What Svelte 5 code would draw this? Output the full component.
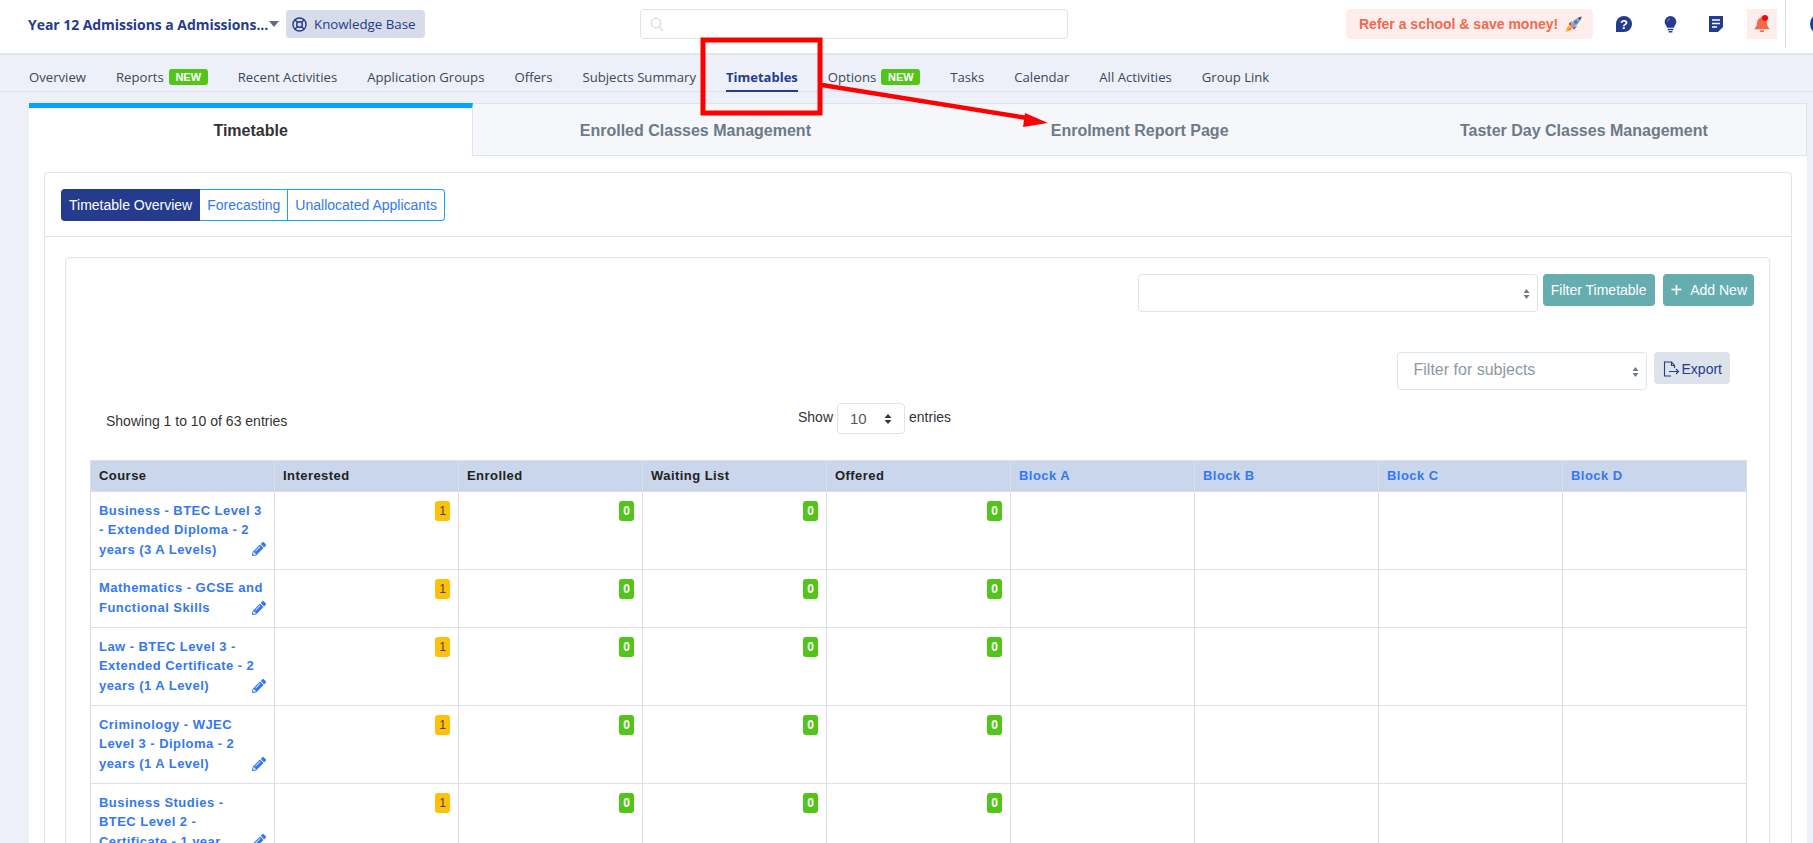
<script lang="ts">
    const navItems = [
        { label: 'Overview' },
        { label: 'Reports', isNew: true },
        { label: 'Recent Activities' },
        { label: 'Application Groups' },
        { label: 'Offers' },
        { label: 'Subjects Summary' },
        { label: 'Timetables', active: true },
        { label: 'Options', isNew: true },
        { label: 'Tasks' },
        { label: 'Calendar' },
        { label: 'All Activities' },
        { label: 'Group Link' }
    ];

    const tabs = ['Timetable', 'Enrolled Classes Management', 'Enrolment Report Page', 'Taster Day Classes Management'];

    const columns = ['Interested', 'Enrolled', 'Waiting List', 'Offered'];
    const blocks = ['Block A', 'Block B', 'Block C', 'Block D'];

    const courses = [
        'Business - BTEC Level 3 - Extended Diploma - 2 years (3 A Levels)',
        'Mathematics - GCSE and Functional Skills',
        'Law - BTEC Level 3 - Extended Certificate - 2 years (1 A Level)',
        'Criminology - WJEC Level 3 - Diploma - 2 years (1 A Level)',
        'Business Studies - BTEC Level 2 - Certificate - 1 year'
    ];
</script>

<header class="topbar">
    <div class="course-select">
        <span class="course-name">Year 12 Admissions a Admissions...</span>
        <span class="caret"></span>
    </div>
    <div class="kb">
        <svg width="15" height="15" viewBox="0 0 16 16" fill="none" stroke="currentColor" stroke-width="1.5">
            <circle cx="8" cy="8" r="7" />
            <circle cx="8" cy="8" r="3" />
            <path d="M3 3l2.900 2.900M13 3l-2.900 2.900M3 13l2.900-2.900M13 13l-2.900-2.900" />
        </svg>
        Knowledge Base
    </div>
    <div class="search">
        <svg width="14" height="15" viewBox="0 0 14 15" fill="none" stroke="#d5dde2" stroke-width="1.3">
            <circle cx="6" cy="6" r="4.8" />
            <path d="M9.5 9.8l3.600 4.200" />
        </svg>
    </div>
    <div class="refer">
        Refer a school &amp; save money!
        <svg width="17" height="17" viewBox="0 0 16 16">
            <path d="M4.500 9L1.800 10.500.6 15l4.500-1.600L7 11.500z" fill="#ffb02e" />
            <path d="M4.500 11L3 13.600 5.600 12.300z" fill="#f4511e" />
            <path d="M3.400 7.600L6.400 4.600 5 9.400z" fill="#e5232f" />
            <path d="M8.400 12.600L11.400 9.600 6.600 11z" fill="#e5232f" />
            <path d="M4.800 9.400C6.200 5.400 10 1.800 15.600.4 14.200 6 10.600 9.800 6.600 11.200z" fill="#8ea6b8" />
            <path d="M11.800 1.800C12.800 2.200 13.800 3.200 14.200 4.200 15 3 15.400 1.700 15.600.4 14.300.7 13 1.200 11.800 1.800z" fill="#46535e" />
            <circle cx="10.300" cy="5.700" r="1.500" fill="#2f78b7" />
        </svg>
    </div>
    <div class="actions">
        <svg class="action" width="16" height="16" viewBox="0 0 16 16">
            <path d="M8 0a8 8 0 1 1 0 16H0V8a8 8 0 0 1 8-8z" fill="#253b8e" />
            <text x="8" y="12.500" text-anchor="middle" class="question">?</text>
        </svg>
        <svg class="action" width="13" height="17" viewBox="0 0 13 18">
            <path d="M6.500 0a6.200 6.200 0 0 1 6.200 6.200c0 2.600-1.900 4-2.600 6.300H2.900C2.200 10.200.3 8.800.3 6.200A6.200 6.200 0 0 1 6.500 0z" fill="#253b8e" />
            <path d="M3.200 6a3.300 3.300 0 0 1 3-3" fill="none" stroke="#7f8fc6" stroke-width="1" />
            <path d="M3.500 14.200h6M4.500 16.600h4" stroke="#253b8e" stroke-width="1.600" />
        </svg>
        <svg class="action" width="14" height="16" viewBox="0 0 14 16">
            <path d="M0 0h14v11l-5 5H0z" fill="#253b8e" />
            <path d="M3 4h8M3 7.500h8M3 11h5" stroke="#fff" stroke-width="1.500" />
        </svg>
        <div class="bell">
            <svg width="16" height="16" viewBox="0 0 16 16">
                <path d="M8 .5c.7 0 1.200.5 1.200 1.200C11.500 2.300 12.800 4.300 13 7c.2 2.500.8 4 2.300 5.500v.8H.7v-.8C2.200 11 2.800 9.500 3 7c.2-2.700 1.500-4.700 3.800-5.300C6.800 1 7.300.5 8 .5z" fill="#f0694f" />
                <path d="M5.800 14.200h4.400A2.200 2 0 0 1 5.800 14.200z" fill="#f0694f" />
            </svg>
            <span class="dot"></span>
        </div>
    </div>
    <div class="account">
        <span class="avatar"></span>
    </div>
</header>

<nav class="subnav">
    {#each navItems as item}
        <span class="nav-item" class:active={item.active}>
            {item.label}
            {#if item.isNew}<span class="new">NEW</span>{/if}
        </span>
    {/each}
</nav>

<main class="page">
    <div class="tabs">
        {#each tabs as tab, i}
            <div class="tab" class:current={i === 0}>{tab}</div>
        {/each}
    </div>

    <section class="panel">
        <div class="card">
            <div class="card-head">
                <div class="pills">
                    <span class="pill on">Timetable Overview</span>
                    <span class="pill">Forecasting</span>
                    <span class="pill">Unallocated Applicants</span>
                </div>
            </div>
            <div class="card-body">
                <div class="inner">
                    <div class="filter-row">
                        <div class="select wide">
                            <svg class="updown" width="7" height="12" viewBox="0 0 7 12"><path d="M3.500 1L6.500 5h-6zM3.500 11L.5 7h6z" fill="#6d7a86" /></svg>
                        </div>
                        <button class="teal">Filter Timetable</button>
                        <button class="teal add"><span class="plus">+</span>Add New</button>
                    </div>

                    <div class="export-row">
                        <div class="select subjects">
                            Filter for subjects
                            <svg class="updown" width="7" height="12" viewBox="0 0 7 12"><path d="M3.500 1L6.500 5h-6zM3.500 11L.5 7h6z" fill="#6d7a86" /></svg>
                        </div>
                        <button class="export">
                            <svg width="17" height="16" viewBox="0 0 17 16" fill="none" stroke="#253b8e" stroke-width="1.100">
                                <path d="M8 15H1.500V1H8.500L11.500 4.500V7" />
                                <path d="M8.500 1V4.500H11.500" />
                                <path d="M6 10.500H15.500M13 8L15.500 10.500 13 13" />
                            </svg>
                            Export
                        </button>
                    </div>

                    <div class="info">
                        <span class="showing">Showing 1 to 10 of 63 entries</span>
                        <div class="length">
                            Show
                            <div class="length-select">
                                10
                                <svg width="8" height="12" viewBox="0 0 8 12"><path d="M4 1l3.500 4H.5zM4 11L.5 7h7z" fill="#333" /></svg>
                            </div>
                            entries
                        </div>
                    </div>

                    <table>
                        <thead>
                            <tr>
                                <th>Course</th>
                                {#each columns as col}<th>{col}</th>{/each}
                                {#each blocks as block}<th class="block">{block}</th>{/each}
                            </tr>
                        </thead>
                        <tbody>
                            {#each courses as course}
                                <tr>
                                    <td class="course">
                                        <svg class="pencil" width="14" height="14" viewBox="0 0 512 512">
                                            <path d="M497.900 142.100l-46.100 46.100c-4.700 4.700-12.300 4.700-17 0l-111-111c-4.700-4.700-4.700-12.300 0-17l46.100-46.100c18.700-18.700 49.100-18.700 67.900 0l60.100 60.100c18.800 18.700 18.800 49.100 0 67.900zM284.200 99.800L21.600 362.400.4 483.900c-2.900 16.400 11.400 30.600 27.800 27.800l121.500-21.300 262.600-262.600c4.700-4.700 4.700-12.300 0-17l-111-111c-4.800-4.700-12.400-4.700-17.100 0zM124.100 339.900c-5.500-5.500-5.500-14.300 0-19.800l154-154c5.500-5.500 14.300-5.500 19.800 0s5.500 14.300 0 19.800l-154 154c-5.500 5.500-14.300 5.500-19.800 0zM88 424h48v36.300l-64.500 11.300-31.100-31.100L51.700 376H88v48z" fill="currentColor" />
                                        </svg>
                                        {course}
                                    </td>
                                    <td class="num"><span class="count warn">1</span></td>
                                    <td class="num"><span class="count ok">0</span></td>
                                    <td class="num"><span class="count ok">0</span></td>
                                    <td class="num"><span class="count ok">0</span></td>
                                    <td></td><td></td><td></td><td></td>
                                </tr>
                            {/each}
                        </tbody>
                    </table>
                </div>
            </div>
        </div>
    </section>
</main>

<!-- annotation drawn on top of the screenshot -->
<svg class="markup" width="1813" height="843" viewBox="0 0 1813 843">
    <rect x="703" y="40" width="117" height="73" fill="none" stroke="#f00" stroke-width="5" />
    <path d="M822 85L1027 118" stroke="#f00" stroke-width="4.500" />
    <path d="M1048 123L1025 113 1023 127z" fill="#f00" />
</svg>

<style>
    :global(body) {
        background: #edf0f8;
        height: 843px;
        overflow: hidden;
        font-family: 'Liberation Sans', Arial, sans-serif;
        font-size: 13px;
        color: #333;
    }

    .topbar {
        height: 53px;
        background: #fff;
        border-bottom: 2px solid #e1e5ec;
        display: flex;
        align-items: flex-start;
        padding-left: 28px;
        font-family: 'Open Sans', sans-serif;
    }

    .topbar > * {
        flex: none;
    }

    .course-select {
        display: flex;
        align-items: center;
        height: 48px;
        width: 258px;
    }

    .course-name {
        font-size: 14px;
        font-weight: 700;
        letter-spacing: -0.05px;
        color: #253b8e;
        white-space: nowrap;
    }

    .caret {
        width: 0;
        height: 0;
        margin-left: 1px;
        border-left: 5px solid transparent;
        border-right: 5px solid transparent;
        border-top: 6px solid #5e6a80;
    }

    .kb {
        display: flex;
        align-items: center;
        gap: 7px;
        width: 139px;
        height: 28px;
        margin-top: 10px;
        padding-left: 6px;
        box-sizing: border-box;
        background: #d6dce8;
        border-radius: 4px;
        color: #253b8e;
        font-size: 13.3px;
        white-space: nowrap;
    }

    .search {
        display: flex;
        align-items: center;
        width: 428px;
        height: 30px;
        margin: 9px 0 0 215px;
        padding-left: 9px;
        box-sizing: border-box;
        border: 1px solid #dde5ea;
        border-radius: 4px;
    }

    .refer {
        display: flex;
        align-items: center;
        gap: 7px;
        width: 247px;
        height: 30px;
        margin: 9px 0 0 278px;
        padding-left: 13px;
        box-sizing: border-box;
        background: #fdeeed;
        border-radius: 4px;
        color: #f0694f;
        font-family: 'Liberation Sans', Arial, sans-serif;
        font-size: 14px;
        font-weight: 700;
        white-space: nowrap;
    }

    .actions {
        display: flex;
        align-items: center;
        height: 30px;
        margin: 9px 0 0 23px;
    }

    .action + .action {
        margin-left: 32px;
    }

    .question {
        fill: #fff;
        font-family: 'Liberation Sans', Arial, sans-serif;
        font-size: 13px;
        font-weight: 700;
    }

    .bell {
        position: relative;
        display: flex;
        align-items: center;
        justify-content: center;
        width: 30px;
        height: 30px;
        margin-left: 24px;
        background: #fdeeed;
    }

    .dot {
        position: absolute;
        top: 6px;
        left: 15px;
        width: 6px;
        height: 6px;
        border-radius: 50%;
        background: #f00;
    }

    .account {
        height: 48px;
        margin-left: 8px;
        padding-left: 24px;
        border-left: 1px solid #d5dfe8;
        display: flex;
        align-items: center;
    }

    .avatar {
        width: 22px;
        height: 22px;
        border-radius: 50%;
        background: #253b8e;
    }

    .subnav {
        height: 37px;
        box-sizing: border-box;
        display: flex;
        align-items: flex-start;
        gap: 30px;
        padding-left: 29px;
        border-bottom: 1px solid #dfe3ea;
        font-family: 'Open Sans', sans-serif;
        font-size: 13.15px;
        color: #3c4658;
    }

    .nav-item {
        display: flex;
        align-items: center;
        gap: 5px;
        height: 37px;
        padding-top: 6px;
        box-sizing: border-box;
        white-space: nowrap;
    }

    .nav-item.active {
        color: #253b8e;
        font-size: 13px;
        font-weight: 700;
        box-shadow: inset 0 -2px 0 #253b8e;
    }

    .new {
        width: 39px;
        height: 16px;
        border-radius: 3px;
        background: #52c41a;
        color: #fff;
        font-family: 'Liberation Sans', Arial, sans-serif;
        font-size: 11px;
        font-weight: 700;
        line-height: 16px;
        text-align: center;
    }

    .page {
        margin: 11px 6px 0 29px;
    }

    .tabs {
        display: grid;
        grid-template-columns: repeat(4, 1fr);
        height: 53px;
        background: #f5f7fa;
        border: 1px solid #dde5ea;
        border-left: 0;
        box-sizing: border-box;
    }

    .tab {
        display: flex;
        align-items: center;
        justify-content: center;
        padding-top: 2px;
        font-size: 16px;
        font-weight: 700;
        color: #6c7a89;
    }

    .tab.current {
        margin: -1px 0 -1px 0;
        padding: 0 0 2px;
        background: #fff;
        border-top: 5px solid #00a5ff;
        border-right: 1px solid #dde5ea;
        color: #333;
    }

    .panel {
        background: #fff;
        padding: 16px 15px;
        height: 700px;
    }

    .card {
        border: 1px solid #dde5ea;
        border-radius: 4px;
    }

    .card-head {
        padding: 16px 16px 15px;
        border-bottom: 1px solid #dde5ea;
    }

    .pills {
        display: flex;
        height: 32px;
    }

    .pill {
        display: flex;
        align-items: center;
        padding: 0 7px;
        border: 1px solid #14a6fa;
        border-left: 0;
        box-sizing: border-box;
        color: #3578f0;
        font-size: 14px;
        white-space: nowrap;
    }

    .pill.on {
        padding-left: 8px;
        background: #253b8e;
        border-color: #253b8e;
        color: #fff;
        border-radius: 4px 0 0 4px;
    }

    .pill:last-child {
        border-radius: 0 4px 4px 0;
    }

    .card-body {
        padding: 20px 21px 0 20px;
    }

    .inner {
        border: 1px solid #dde5ea;
        border-radius: 4px;
        padding: 16px 15px 0 24px;
        background: #fff;
    }

    .filter-row {
        display: flex;
        justify-content: flex-end;
        align-items: flex-start;
    }

    .select {
        position: relative;
        height: 38px;
        box-sizing: border-box;
        border: 1px solid #dde5ea;
        border-radius: 4px;
        display: flex;
        align-items: center;
    }

    .wide {
        width: 400px;
    }

    .updown {
        position: absolute;
        right: 7px;
        top: 13px;
    }

    .teal {
        height: 32px;
        margin-left: 5px;
        padding: 0 8px;
        border: 0;
        border-radius: 4px;
        background: #66adb0;
        color: #fff;
        font-family: 'Liberation Sans', Arial, sans-serif;
        font-size: 14px;
        white-space: nowrap;
    }

    .add {
        margin-left: 8px;
        padding: 0 7px 0 8px;
    }

    .plus {
        font-size: 20px;
        font-weight: 400;
        line-height: 16px;
        margin-right: 8px;
        vertical-align: -2px;
    }

    .export-row {
        display: flex;
        justify-content: flex-end;
        align-items: flex-start;
        margin-top: 40px;
        padding-right: 24px;
    }

    .subjects {
        width: 250px;
        padding: 0 0 2px 16px;
        color: #8d99a5;
        font-size: 16px;
    }

    .export {
        display: flex;
        align-items: center;
        gap: 2px;
        height: 32px;
        margin-left: 7px;
        padding: 1px 8px 0 9px;
        border: 0;
        border-radius: 4px;
        background: #dde3ea;
        color: #253b8e;
        font-family: 'Liberation Sans', Arial, sans-serif;
        font-size: 14px;
    }

    .info {
        display: flex;
        align-items: flex-start;
        height: 57px;
        margin-top: 13px;
    }

    .showing {
        width: 708px;
        padding: 11px 0 0 16px;
        box-sizing: border-box;
        font-size: 14px;
        line-height: 15px;
    }

    .length {
        display: flex;
        align-items: flex-start;
        gap: 4px;
        font-size: 14px;
        line-height: 28px;
    }

    .length-select {
        display: flex;
        align-items: center;
        justify-content: space-between;
        width: 68px;
        height: 31px;
        padding: 0 12px;
        box-sizing: border-box;
        border: 1px solid #dde5ea;
        border-radius: 4px;
        color: #5a5a5a;
        font-size: 15px;
    }

    table {
        width: 1657px;
        table-layout: fixed;
        border-collapse: collapse;
        font-size: 13px;
    }

    th,
    td {
        border: 1px solid #dcdfe6;
        padding: 9px 8px;
        vertical-align: top;
        line-height: 19.5px;
        letter-spacing: 0.45px;
    }

    th {
        padding: 6px 8px;
        line-height: 18px;
        background: #c9d6ec;
        color: #222;
        text-align: left;
        font-weight: 700;
    }

    th.block {
        color: #3578f0;
    }

    .course {
        padding: 8.5px 10.5px 9.9px 8px;
        color: #3578f0;
        font-weight: 700;
        position: relative;
    }

    .pencil {
        position: absolute;
        right: 8px;
        bottom: 12.5px;
    }

    .num {
        text-align: right;
    }

    .count {
        display: inline-block;
        width: 15px;
        height: 20px;
        border-radius: 3px;
        font-size: 12px;
        line-height: 20px;
        letter-spacing: 0;
        text-align: center;
        vertical-align: top;
    }

    .warn {
        background: #ffc107;
        color: #444;
    }

    .ok {
        background: #52c41a;
        color: #fff;
        font-weight: 700;
    }

    .markup {
        position: absolute;
        top: 0;
        left: 0;
        pointer-events: none;
    }
</style>
